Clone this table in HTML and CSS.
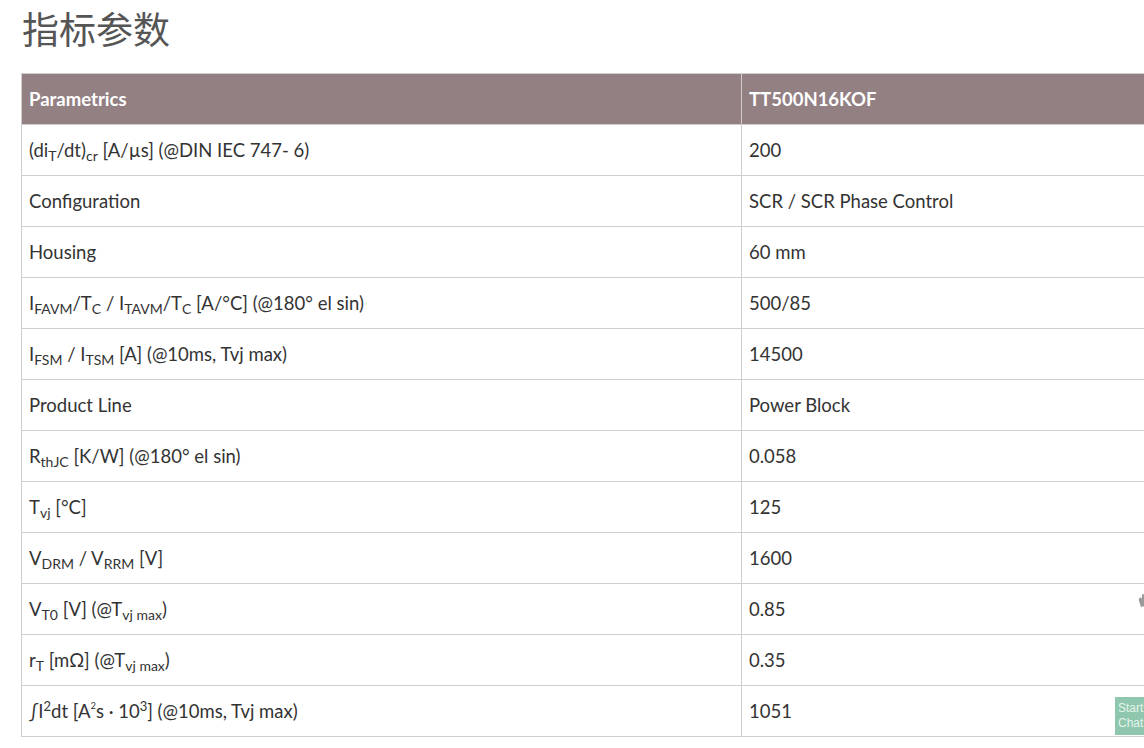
FILE: index.html
```html
<!DOCTYPE html>
<html lang="zh">
<head>
<meta charset="utf-8">
<title>指标参数</title>
<link rel="stylesheet" href="styles.css">
</head>
<body>
<div class="page">
  <h2 class="title">指标参数</h2>
  <table class="spec">
    <thead>
      <tr><th>Parametrics</th><th>TT500N16KOF</th></tr>
    </thead>
    <tbody>
      <tr><td>(di<sub>T</sub>/dt)<sub>cr</sub> [A/µs] (@DIN IEC 747- 6)</td><td>200</td></tr>
      <tr><td>Configuration</td><td>SCR / SCR Phase Control</td></tr>
      <tr><td>Housing</td><td>60 mm</td></tr>
      <tr><td>I<sub>FAVM</sub>/T<sub>C</sub> / I<sub>TAVM</sub>/T<sub>C</sub> [A/°C] (@180° el sin)</td><td>500/85</td></tr>
      <tr><td>I<sub>FSM</sub> / I<sub>TSM</sub> [A] (@10ms, Tvj max)</td><td>14500</td></tr>
      <tr><td>Product Line</td><td>Power Block</td></tr>
      <tr><td>R<sub>thJC</sub> [K/W] (@180° el sin)</td><td>0.058</td></tr>
      <tr><td>T<sub>vj</sub> [°C]</td><td>125</td></tr>
      <tr><td>V<sub>DRM</sub> / V<sub>RRM</sub> [V]</td><td>1600</td></tr>
      <tr><td>V<sub>T0</sub> [V] (@T<sub>vj max</sub>)</td><td>0.85</td></tr>
      <tr><td>r<sub>T</sub> [mΩ] (@T<sub>vj max</sub>)</td><td>0.35</td></tr>
      <tr><td>∫I<sup>2</sup>dt [A<sup class="tiny">2</sup>s · 10<sup>3</sup>] (@10ms, Tvj max)</td><td>1051</td></tr>
    </tbody>
  </table>
</div>
<div class="float-icon" aria-hidden="true">
  <svg width="14" height="16" viewBox="0 0 14 16"><path d="M3 8 C2 5 5 3 6 6 L6 2 C6 0.5 8 0.5 8 2 L8 6 L9 3 C9.5 1.5 11.5 2 11 3.5 L10 8 L12 6 C13 5 14 6.5 13 7.5 L9 13 L5 14 Z" fill="#9a9a9a"/></svg>
</div>
<div class="chat-tab">Start<br>Chat</div>
</body>
</html>
```
FILE: styles.css
```css
html, body {
  margin: 0;
  padding: 0;
  overflow: hidden;
  background: #ffffff;
}
body {
  font-family: Lato, "Noto Sans", "Noto Sans CJK SC", sans-serif;
  color: #333333;
}
.page {
  padding: 0 0 0 21px;
}
.title {
  margin: 0;
  padding-top: 3px;
  height: 73px;
  box-sizing: border-box;
  font-family: "Noto Sans CJK SC", sans-serif;
  font-weight: 400;
  font-size: 37px;
  line-height: 50px;
  color: #555555;
  padding-left: 1px;
}
.spec {
  border-collapse: collapse;
  width: 1440px;
  table-layout: fixed;
  font-size: 18.5px;
}
.spec th, .spec td {
  border: 1px solid #d2cdcd;
  height: 51px;
  padding: 0 7px;
  text-align: left;
  vertical-align: middle;
  box-sizing: border-box;
  white-space: nowrap;
}
.spec th:first-child, .spec td:first-child {
  width: 720px;
}
.spec th {
  background: #938083;
  color: #ffffff;
  font-weight: 700;
}
.spec sub {
  font-size: 14px;
  vertical-align: -4px;
  line-height: 0;
}
.spec sup {
  font-size: 13px;
  vertical-align: 7px;
  line-height: 0;
}
.spec sup.tiny {
  font-size: 9px;
  vertical-align: 9px;
}
.float-icon {
  position: fixed;
  left: 1136px;
  top: 593px;
}
.chat-tab {
  position: fixed;
  left: 1115px;
  top: 697px;
  width: 40px;
  height: 38px;
  box-sizing: border-box;
  padding: 4px 0 0 3px;
  background: #8ec7ae;
  color: #e4f3ec;
  font-family: "Liberation Sans", sans-serif;
  font-size: 12px;
  line-height: 15px;
}
```
